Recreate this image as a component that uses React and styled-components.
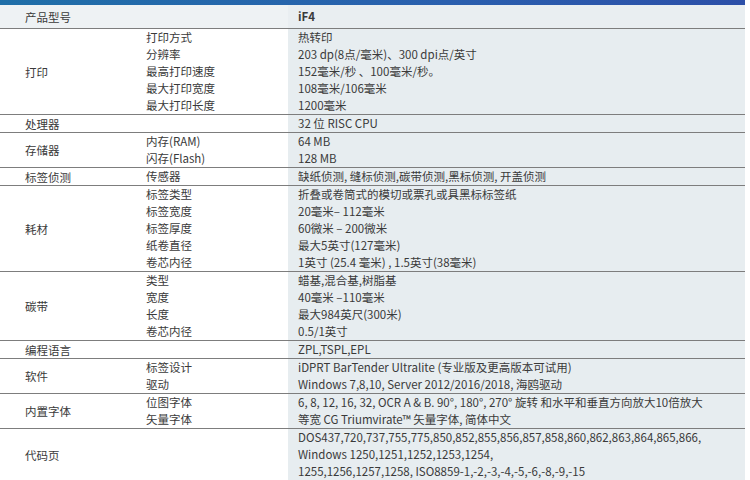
import React from "react";
import styled, { createGlobalStyle } from "styled-components";

const Global = createGlobalStyle`
  body { margin: 0; background: #fff; font-family: "Noto Sans CJK SC", "Noto Sans", sans-serif; }
`;

const Table = styled.div`
  width: 745px;
  color: #3a3a3a;
  font-size: 11.5px;
`;
const TopBar = styled.div`
  height: 5px;
  background: linear-gradient(90deg, #1f6fa8, #2a5fae 60%, #2c4fa8);
`;
const Section = styled.div`
  display: grid;
  grid-template-columns: 140px 148px 1fr;
  border-bottom: ${(p) => (p.$last ? "none" : "1.5px solid #7d7d7d")};
  background: ${(p) => (p.$head ? "#eef2f4" : "#fff")};
`;
const Label = styled.div`
  grid-row: 1 / span ${(p) => p.$span};
  display: flex;
  align-items: center;
  padding-left: 25px;
`;
const Sub = styled.div`
  grid-column: 2;
  padding-left: 6px;
  line-height: ${(p) => p.$lh}px;
  height: ${(p) => p.$lh}px;
`;
const Val = styled.div`
  grid-column: 3;
  background: ${(p) => (p.$bold ? "#e9eef1" : "#e7edf0")};
  padding-left: 10px;
  line-height: ${(p) => p.$lh}px;
  height: ${(p) => p.$lh}px;
  white-space: nowrap;
  font-weight: ${(p) => (p.$bold ? 700 : 400)};
`;

const sections = [
  { label: "打印", rows: [
    ["打印方式", "热转印"],
    ["分辨率", "203 dp(8点/毫米)、300 dpi点/英寸"],
    ["最高打印速度", "152毫米/秒 、100毫米/秒。"],
    ["最大打印宽度", "108毫米/106毫米"],
    ["最大打印长度", "1200毫米"],
  ] },
  { label: "处理器", rows: [["", "32 位 RISC CPU"]] },
  { label: "存储器", rows: [["内存(RAM)", "64 MB"], ["闪存(Flash)", "128 MB"]] },
  { label: "标签侦测", rows: [["传感器", "缺纸侦测, 缝标侦测,碳带侦测,黑标侦测, 开盖侦测"]] },
  { label: "耗材", rows: [
    ["标签类型", "折叠或卷筒式的模切或票孔或具黑标标签纸"],
    ["标签宽度", "20毫米–  112毫米"],
    ["标签厚度", "60微米 – 200微米"],
    ["纸卷直径", "最大5英寸(127毫米)"],
    ["卷芯内径", "1英寸 (25.4 毫米) , 1.5英寸(38毫米)"],
  ] },
  { label: "碳带", rows: [
    ["类型", "蜡基,混合基,树脂基"],
    ["宽度", "40毫米 –110毫米"],
    ["长度", "最大984英尺(300米)"],
    ["卷芯内径", "0.5/1英寸"],
  ] },
  { label: "编程语言", rows: [["", "ZPL,TSPL,EPL"]] },
  { label: "软件", rows: [["标签设计", "iDPRT BarTender Ultralite (专业版及更高版本可试用)"], ["驱动", "Windows 7,8,10, Server 2012/2016/2018, 海鸥驱动"]] },
  { label: "内置字体", rows: [["位图字体", "6, 8, 12, 16, 32, OCR A & B.  90°, 180°, 270° 旋转 和水平和垂直方向放大10倍放大"], ["矢量字体", " 等宽 CG Triumvirate™ 矢量字体, 简体中文"]] },
  { label: "代码页", rows: [
    ["", "DOS437,720,737,755,775,850,852,855,856,857,858,860,862,863,864,865,866,"],
    ["", "Windows 1250,1251,1252,1253,1254,"],
    ["", "1255,1256,1257,1258, ISO8859-1,-2,-3,-4,-5,-6,-8,-9,-15"],
  ] },
];

export default function App() {
  return (
    <>
      <Global />
      <Table>
        <TopBar />
        <Section $head>
          <Label $span={1}>产品型号</Label>
          <Sub $lh={23} />
          <Val $lh={23} $bold>iF4</Val>
        </Section>
        {sections.map((s, i) => (
          <Section key={s.label} $last={i === sections.length - 1}>
            <Label $span={s.rows.length}>{s.label}</Label>
            {s.rows.map(([a, b], j) => (
              <React.Fragment key={j}>
                <Sub $lh={17}>{a}</Sub>
                <Val $lh={17}>{b}</Val>
              </React.Fragment>
            ))}
          </Section>
        ))}
      </Table>
    </>
  );
}
